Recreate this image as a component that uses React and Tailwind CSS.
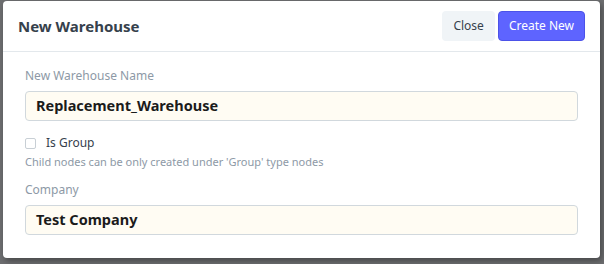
import React from 'react';

const Field = ({ label, value }) => (
  <div>
    <div className="text-[12px] leading-[16px] text-[#8d99a6] mb-[7px]">{label}</div>
    <div className="h-[30px] rounded-[4px] border border-[#d1d8dd] bg-[#fffcf3] px-[10px] flex items-center text-[14.5px] font-bold text-[#1b1b1b]">
      {value}
    </div>
  </div>
);

const App = () => {
  return (
    <div className="w-[604px] h-[264px] bg-[#6d6e70] pl-[3px] pt-[1px] pr-[4px] pb-[6px]" style={{ fontFamily: '"Noto Sans", "Open Sans", sans-serif' }}>
      <div className="h-full bg-white rounded-[4px] shadow-[2px_3px_6px_rgba(0,0,0,0.35)] flex flex-col">
        <div className="h-[51px] border-b border-[#e3e8ec] flex items-center justify-between pl-[15px] pr-[15px]">
          <h1 className="text-[15px] font-bold text-[#36414c]">New Warehouse</h1>
          <div className="flex gap-[3px]">
            <button className="h-[30px] px-[11px] rounded-[4px] bg-[#f0f4f7] text-[12px] text-[#36414c]">Close</button>
            <button className="h-[30px] px-[10px] rounded-[4px] bg-[#5e64ff] border border-[#4c52e8] text-[12px] text-white">Create New</button>
          </div>
        </div>
        <div className="px-[22px] pt-[16px] flex flex-col">
          <Field label="New Warehouse Name" value="Replacement_Warehouse" />
          <div className="flex items-center mt-[14px] h-[16px]">
            <span className="w-[11px] h-[11px] border border-[#c8cfd5] rounded-[2px] bg-white"></span>
            <span className="ml-[10px] text-[12px] text-[#36414c]">Is Group</span>
          </div>
          <div className="mt-[3px] text-[11px] leading-[16px] text-[#8d99a6]">Child nodes can be only created under 'Group' type nodes</div>
          <div className="mt-[12px]">
            <Field label="Company" value="Test Company" />
          </div>
        </div>
      </div>
    </div>
  );
};

export default App;
